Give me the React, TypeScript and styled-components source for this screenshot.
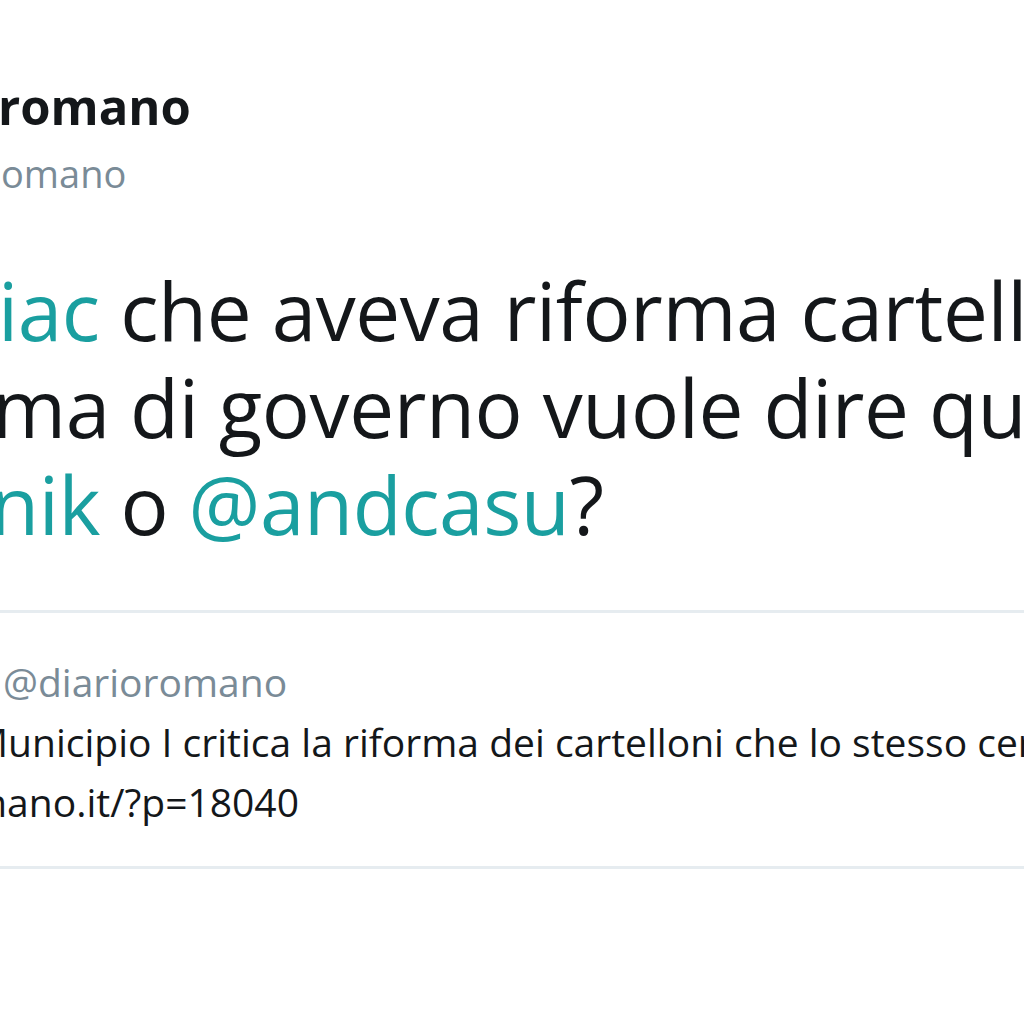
import React from "react";
import styled, { createGlobalStyle } from "styled-components";

const Global = createGlobalStyle`
  html, body {
    margin: 0;
    padding: 0;
    background: #ffffff;
    overflow: hidden;
  }
  body {
    font-family: "Open Sans", "Noto Sans", "Liberation Sans", sans-serif;
    -webkit-font-smoothing: antialiased;
  }
`;

const Page = styled.div`
  width: 1024px;
  height: 1024px;
  overflow: hidden;
  background: #ffffff;
  display: flex;
  flex-direction: column;
`;

const Header = styled.header`
  display: flex;
  flex-direction: column;
  padding-top: 78px;
  gap: 15px;
`;

const Name = styled.div`
  font-size: 49px;
  line-height: 56px;
  font-weight: 700;
  color: #14171a;
  white-space: nowrap;
  text-indent: -2px;
`;

const Handle = styled.div`
  font-size: 38px;
  line-height: 48px;
  color: #7a8b97;
  white-space: nowrap;
  text-indent: 1px;
`;

const Body = styled.p`
  margin: 64px 0 0 0;
  font-size: 80px;
  line-height: 97px;
  letter-spacing: -0.4px;
  color: #14171a;
`;

const Line = styled.span<{ $indent: number }>`
  display: block;
  white-space: nowrap;
  text-indent: ${(p) => p.$indent}px;
`;

const Mention = styled.span`
  color: #1a9fa0;
`;

const Quote = styled.section`
  margin-top: 58px;
  border-top: 3px solid #e6ecf0;
  border-bottom: 3px solid #e6ecf0;
  padding: 39px 0 34px 0;
  font-size: 39px;
  line-height: 60px;
  color: #14171a;
`;

const QuoteHandle = styled(Line)`
  color: #7a8b97;
`;

export default function App() {
  return (
    <Page>
      <Global />
      <Header>
        <Name>romano</Name>
        <Handle>omano</Handle>
      </Header>
      <Body>
        <Line $indent={-2}>
          <Mention>iac</Mention> che aveva riforma cartelloni
        </Line>
        <Line $indent={-8}>ma di governo vuole dire quindi</Line>
        <Line $indent={-10}>
          <Mention>nik</Mention> o <Mention>@andcasu</Mention>?
        </Line>
      </Body>
      <Quote>
        <QuoteHandle $indent={3}>@diarioromano</QuoteHandle>
        <Line $indent={-27}>
          Municipio I critica la riforma dei cartelloni che lo stesso cerca
        </Line>
        <Line $indent={-29}>mano.it/?p=18040</Line>
      </Quote>
    </Page>
  );
}
